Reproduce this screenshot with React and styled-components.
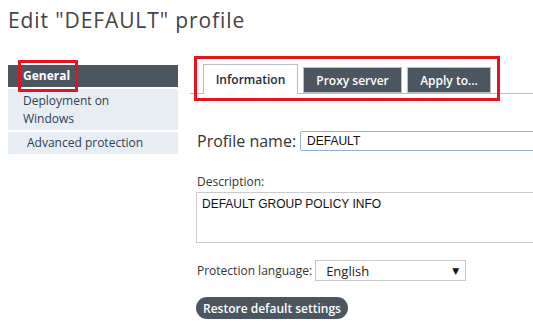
import React from "react";
import styled, { createGlobalStyle } from "styled-components";

const Global = createGlobalStyle`
  html, body { margin: 0; padding: 0; background: #fff; }
  body { font-family: "Open Sans", "Noto Sans", sans-serif; }
  * { box-sizing: border-box; }
`;

const DARK = "#4b5660";
const RED = "#e3141b";

const Page = styled.div`
  width: 533px;
  height: 327px;
  overflow: hidden;
  padding: 8px 0 0 8px;
`;

const Title = styled.h1`
  margin: 0;
  font-size: 21px;
  line-height: 24px;
  font-weight: 400;
  letter-spacing: 0.9px;
  color: #444;
`;

const Body = styled.div`
  display: flex;
  margin-top: 33px;
`;

const Sidebar = styled.nav`
  width: 170px;
  flex: none;
  display: flex;
  flex-direction: column;
`;

const NavItem = styled.div`
  background: ${(p) => (p.$active ? DARK : "#e8edf4")};
  color: ${(p) => (p.$active ? "#fff" : "#2b3f55")};
  font-size: 12px;
  font-weight: ${(p) => (p.$active ? 700 : 400)};
  line-height: ${(p) => (p.$multi ? "18px" : "22px")};
  padding: ${(p) => (p.$multi ? "3px 0 2px" : "0")};
  padding-left: ${(p) => (p.$sub ? "19px" : "15px")};
  border-bottom: 2px solid #fff;
  &:last-child { border-bottom: none; }
`;

const Highlight = styled.span`
  display: inline-block;
  position: relative;
  &::after {
    content: "";
    position: absolute;
    left: -5px;
    right: -8px;
    top: -5px;
    bottom: -5px;
    border: 3px solid ${RED};
  }
`;

const Main = styled.main`
  flex: none;
  width: 400px;
  margin-left: 12px;
`;

const TabArea = styled.div`
  position: relative;
`;

const TabBar = styled.div`
  display: flex;
  align-items: flex-end;
  gap: 5px;
  height: 29px;
  padding-left: 13px;
  border-bottom: 1px solid #b8bec4;
`;

const Tab = styled.div`
  display: flex;
  align-items: center;
  justify-content: center;
  width: ${(p) => p.$w}px;
  height: ${(p) => (p.$active ? 30 : 26)}px;
  margin-bottom: ${(p) => (p.$active ? "-1px" : "0")};
  font-size: 12px;
  font-weight: 600;
  color: ${(p) => (p.$active ? "#1c2a3a" : "#fff")};
  background: ${(p) => (p.$active ? "#fff" : DARK)};
  border: 1px solid #b8bec4;
  border-bottom: ${(p) => (p.$active ? "none" : "1px solid #b8bec4")};
`;

const TabHighlight = styled.div`
  position: absolute;
  left: 4px;
  top: -9px;
  width: 306px;
  height: 45px;
  border: 3px solid ${RED};
  pointer-events: none;
`;

const Form = styled.div`
  padding-left: 6px;
  display: flex;
  flex-direction: column;
`;

const NameRow = styled.div`
  display: flex;
  align-items: center;
  gap: 4px;
  margin-top: 37px;
`;

const BigLabel = styled.label`
  font-size: 16px;
  line-height: 20px;
  color: #333;
  padding-left: 1px;
`;

const TextInput = styled.div`
  width: 260px;
  height: 20px;
  border: 1px solid #8fb0d9;
  border-radius: 2px;
  padding-left: 6px;
  font-family: "Liberation Sans", Arial, sans-serif;
  font-size: 12px;
  line-height: 18px;
  color: #111;
`;

const SmallLabel = styled.label`
  font-size: 12px;
  line-height: 15px;
  color: #333;
  padding-left: 1px;
`;

const DescLabel = styled(SmallLabel)`
  margin-top: 23px;
  display: block;
`;

const TextArea = styled.div`
  margin-top: 3px;
  width: 340px;
  height: 51px;
  border: 1px solid #cbcbcb;
  padding: 4px 5px;
  font-family: "Liberation Sans", Arial, sans-serif;
  font-size: 12px;
  line-height: 15px;
  color: #111;
`;

const LangRow = styled.div`
  display: flex;
  align-items: center;
  gap: 3px;
  margin-top: 17px;
`;

const SelectBox = styled.div`
  width: 151px;
  height: 21px;
  border: 1px solid #c8c8c8;
  display: flex;
  align-items: center;
  justify-content: space-between;
  padding: 0 6px 0 10px;
  font-size: 13px;
  color: #222;
`;

const Arrow = styled.span`
  font-size: 9px;
  color: #111;
  font-family: "DejaVu Sans", sans-serif;
`;

const Button = styled.button`
  margin-top: 16px;
  align-self: flex-start;
  width: 152px;
  height: 22px;
  border: none;
  border-radius: 11px;
  background: ${DARK};
  color: #fff;
  font-family: inherit;
  font-size: 12px;
  font-weight: 600;
  padding: 0;
`;

export default function App() {
  return (
    <>
      <Global />
      <Page>
        <Title>Edit "DEFAULT" profile</Title>
        <Body>
          <Sidebar>
            <NavItem $active>
              <Highlight>General</Highlight>
            </NavItem>
            <NavItem $multi>
              Deployment on
              <br />
              Windows
            </NavItem>
            <NavItem $sub>Advanced protection</NavItem>
          </Sidebar>
          <Main>
            <TabArea>
              <TabBar>
                <Tab $active $w={95}>Information</Tab>
                <Tab $w={99}>Proxy server</Tab>
                <Tab $w={84}>Apply to...</Tab>
              </TabBar>
              <TabHighlight />
            </TabArea>
            <Form>
              <NameRow>
                <BigLabel>Profile name:</BigLabel>
                <TextInput>DEFAULT</TextInput>
              </NameRow>
              <DescLabel>Description:</DescLabel>
              <TextArea>DEFAULT GROUP POLICY INFO</TextArea>
              <LangRow>
                <SmallLabel>Protection language:</SmallLabel>
                <SelectBox>
                  <span>English</span>
                  <Arrow>▼</Arrow>
                </SelectBox>
              </LangRow>
              <Button>Restore default settings</Button>
            </Form>
          </Main>
        </Body>
      </Page>
    </>
  );
}
